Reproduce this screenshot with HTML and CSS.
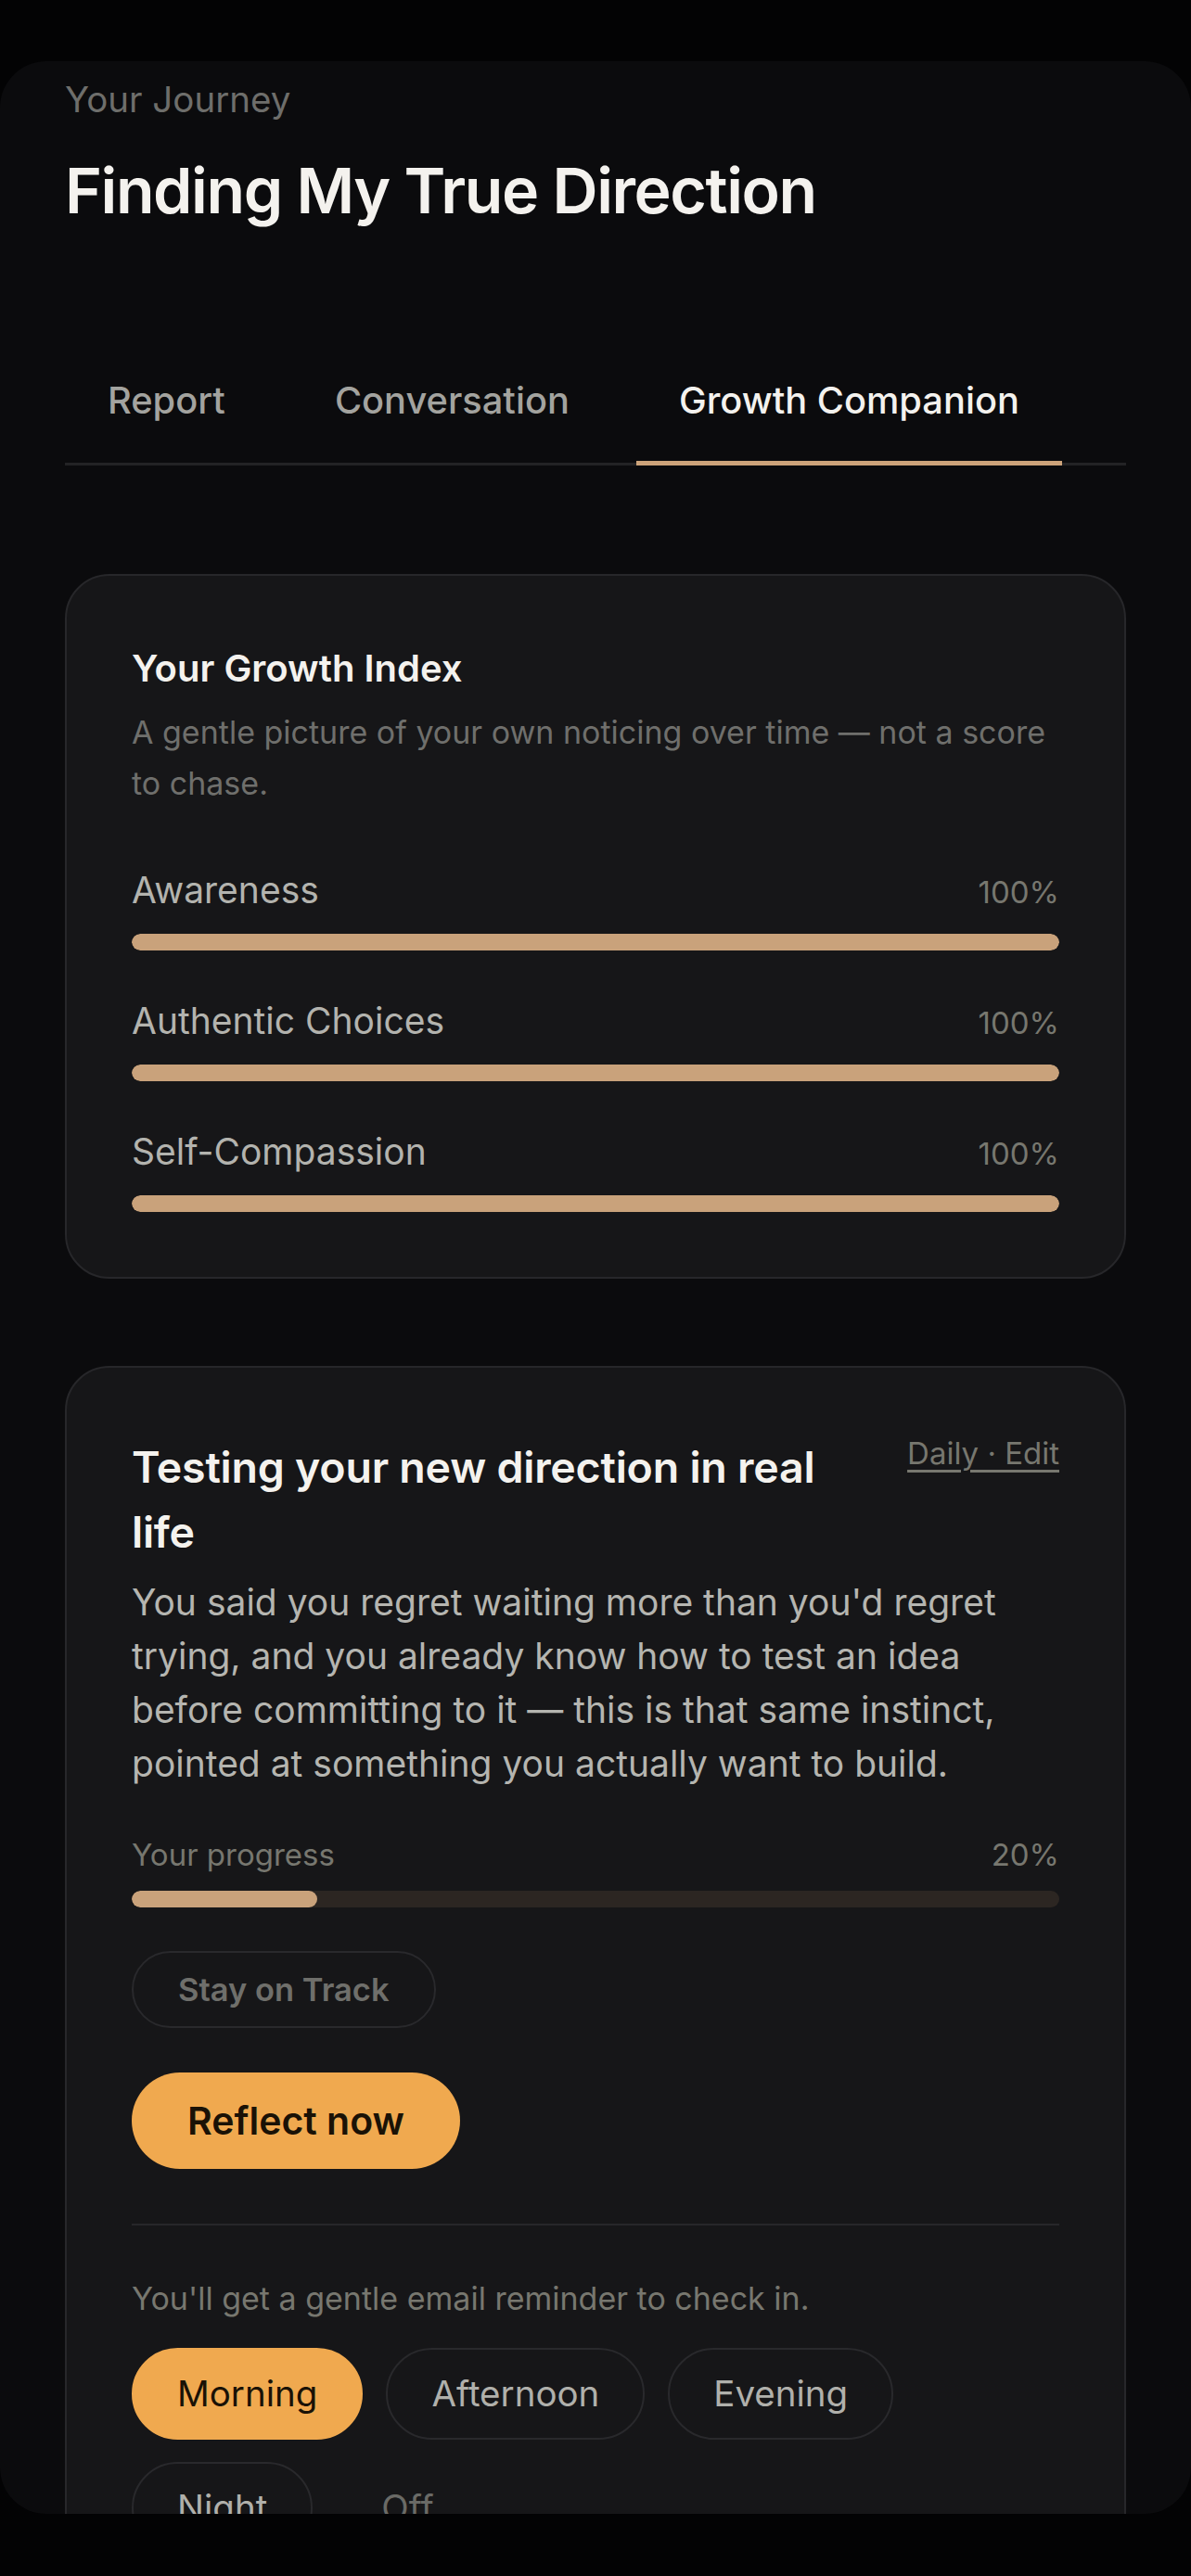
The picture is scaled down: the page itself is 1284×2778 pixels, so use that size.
FILE: index.html
```html
<!DOCTYPE html>
<html lang="en">
<head>
    <meta charset="UTF-8">
    <meta name="viewport" content="width=device-width, initial-scale=1.0">
    <title>Your Journey</title>
    <link rel="stylesheet" href="styles.css">
</head>
<body>
    <div class="screen">
        <header class="journey-head">
            <p class="eyebrow">Your Journey</p>
            <h1 class="journey-title">Finding My True Direction</h1>
        </header>

        <nav class="tabs">
            <a class="tab">Report</a>
            <a class="tab">Conversation</a>
            <a class="tab active">Growth Companion</a>
        </nav>

        <section class="card index-card">
            <h2 class="card-title">Your Growth Index</h2>
            <p class="card-sub">A gentle picture of your own noticing over time — not a score to chase.</p>

            <div class="metrics">
                <div class="metric">
                    <div class="metric-row">
                        <span class="metric-name">Awareness</span>
                        <span class="metric-pct">100%</span>
                    </div>
                    <div class="bar"><div class="bar-fill" style="width: 100%"></div></div>
                </div>
                <div class="metric">
                    <div class="metric-row">
                        <span class="metric-name">Authentic Choices</span>
                        <span class="metric-pct">100%</span>
                    </div>
                    <div class="bar"><div class="bar-fill" style="width: 100%"></div></div>
                </div>
                <div class="metric">
                    <div class="metric-row">
                        <span class="metric-name">Self-Compassion</span>
                        <span class="metric-pct">100%</span>
                    </div>
                    <div class="bar"><div class="bar-fill" style="width: 100%"></div></div>
                </div>
            </div>
        </section>

        <section class="card focus-card">
            <div class="focus-head">
                <h2 class="focus-title">Testing your new direction in real life</h2>
                <a class="focus-edit">Daily · Edit</a>
            </div>
            <p class="focus-text">You said you regret waiting more than you'd regret trying, and you already know how to test an idea before committing to it — this is that same instinct, pointed at something you actually want to build.</p>

            <div class="progress">
                <div class="progress-row">
                    <span>Your progress</span>
                    <span>20%</span>
                </div>
                <div class="bar track"><div class="bar-fill" style="width: 20%"></div></div>
            </div>

            <button class="chip-outline">Stay on Track</button>
            <button class="btn-primary">Reflect now</button>

            <hr class="divider">

            <p class="hint">You'll get a gentle email reminder to check in.</p>
            <div class="times">
                <button class="time active">Morning</button>
                <button class="time">Afternoon</button>
                <button class="time">Evening</button>
                <button class="time">Night</button>
                <button class="time off">Off</button>
            </div>
        </section>
    </div>
</body>
</html>
```

FILE: styles.css
```css
body {
    margin: 0;
    background: #030304;
    font-family: Inter, "Noto Sans", sans-serif;
    color: #f4f2ee;
    height: 2778px;
    overflow: hidden;
}

.screen {
    margin-top: 66px;
    height: 2645px;
    background: #0b0b0d;
    border-radius: 50px;
    overflow: hidden;
    padding: 14px 70px 0;
    box-sizing: border-box;
    display: flex;
    flex-direction: column;
}

.eyebrow {
    margin: 0;
    font-size: 38.5px;
    line-height: 55px;
    color: #6e6e6b;
}

.journey-title {
    margin: 28px 0 0;
    font-size: 68px;
    line-height: 84px;
    font-weight: 600;
    letter-spacing: -0.021em;
}

/* tabs */
.tabs {
    margin-top: 123px;
    display: flex;
    gap: 26px;
    border-bottom: 3px solid #232325;
}

.tab {
    padding: 36px 46px 39px;
    margin-bottom: -3px;
    border-bottom: 5px solid transparent;
    font-size: 39.8px;
    line-height: 52px;
    font-weight: 500;
    color: #a3a39f;
}

.tab.active {
    color: #f4f2ee;
    border-bottom-color: #cda37a;
}

/* cards */
.card {
    flex-shrink: 0;
    background: #161618;
    border: 2px solid #27272a;
    border-radius: 48px;
    padding: 72px 70px 70px;
}

.index-card {
    margin-top: 117px;
}

.card-title {
    margin: 0;
    font-size: 40px;
    line-height: 55px;
    font-weight: 600;
}

.card-sub {
    margin: 14px 0 0;
    font-size: 34px;
    line-height: 55px;
    color: #6f6f6c;
}

.metrics {
    margin-top: 62px;
    display: flex;
    flex-direction: column;
    gap: 50px;
}

.metric-row {
    display: flex;
    justify-content: space-between;
    align-items: baseline;
}

.metric-name {
    font-size: 39px;
    line-height: 52px;
    color: #b3b3ae;
}

.metric-pct {
    font-size: 33px;
    color: #77776f;
}

.bar {
    margin-top: 21px;
    height: 18px;
    border-radius: 9px;
    overflow: hidden;
}

.bar.track {
    background: #2c2622;
    margin-top: 15px;
}

.bar-fill {
    height: 100%;
    background: #c9a27b;
    border-radius: 9px;
}

/* focus card */
.focus-card {
    margin-top: 94px;
    padding-bottom: 200px;
}

.focus-head {
    display: flex;
    justify-content: space-between;
    align-items: flex-start;
    gap: 60px;
}

.focus-title {
    margin: 0;
    font-size: 46.5px;
    line-height: 70px;
    font-weight: 600;
    letter-spacing: -0.005em;
}

.focus-edit {
    flex-shrink: 0;
    font-size: 33px;
    line-height: 40px;
    color: #77776f;
    text-decoration: underline;
    text-decoration-thickness: 3px;
    text-underline-offset: 6px;
}

.focus-text {
    margin: 12px 0 0;
    font-size: 39px;
    line-height: 58px;
    color: #b5b5b0;
}

.progress {
    margin-top: 45px;
}

.progress-row {
    display: flex;
    justify-content: space-between;
    font-size: 33px;
    line-height: 48px;
    color: #77776f;
}

.chip-outline {
    display: block;
    margin-top: 47px;
    padding: 18px 48px;
    background: transparent;
    border: 2px solid #29292c;
    border-radius: 999px;
    font-family: inherit;
    font-size: 34.5px;
    line-height: 43px;
    font-weight: 600;
    color: #6f6f6b;
}

.btn-primary {
    display: block;
    margin-top: 48px;
    padding: 28px 60px;
    background: #f0a94f;
    border: none;
    border-radius: 999px;
    font-family: inherit;
    font-size: 41px;
    line-height: 48px;
    font-weight: 600;
    color: #1a1206;
}

.divider {
    margin: 59px 0 0;
    border: none;
    height: 2px;
    background: #27272a;
}

.hint {
    margin: 55px 0 0;
    font-size: 34px;
    line-height: 48px;
    color: #77776f;
}

.times {
    margin-top: 29px;
    display: flex;
    flex-wrap: wrap;
    gap: 24px 25px;
}

.time {
    padding: 24px 47px;
    background: transparent;
    border: 2px solid #29292c;
    border-radius: 999px;
    font-family: inherit;
    font-size: 38.5px;
    line-height: 47px;
    color: #b0b0ab;
}

.time.active {
    background: #f0a94f;
    border-color: #f0a94f;
    color: #1a1206;
}

.time.off {
    border-color: transparent;
    color: #6a6a66;
}
```
